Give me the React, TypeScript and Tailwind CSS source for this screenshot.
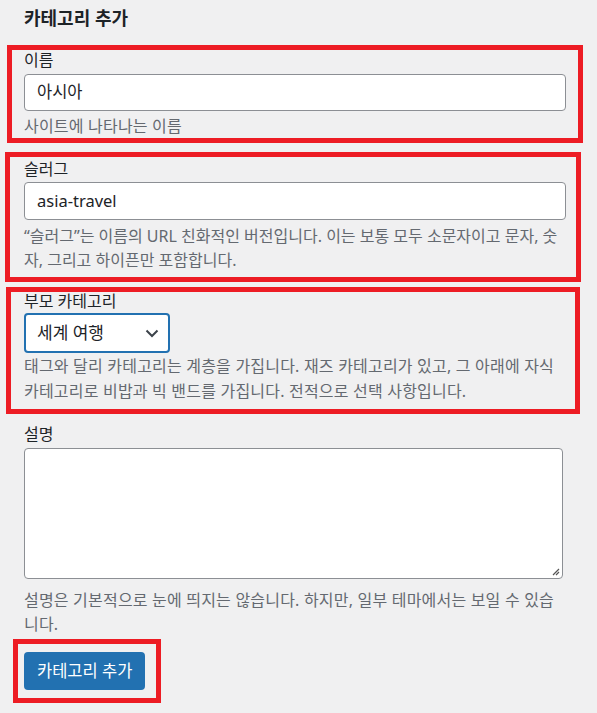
import React from "react";

const font = "font-['Noto_Sans','Noto_Sans_CJK_KR',sans-serif]";

export default function App() {
  return (
    <div className={`min-h-[713px] w-[597px] bg-[#f0f0f1] text-[#1d2327] ${font}`}>
      <div className="pl-[24px] pr-[31px] pt-[6px]">
        <h2 className="text-[18px] font-bold leading-[24px]">카테고리 추가</h2>

        {/* 이름 */}
        <div className="mt-[15px] -ml-[17px] -mr-[17px] border-[5px] border-[#ed1c24] px-[12px] pt-0 pb-[1px]">
          <label className="block text-[16px] leading-[20px]">이름</label>
          <div className="mt-[4px] flex h-[37px] items-center rounded-[4px] border border-[#8c8f94] bg-white px-[12px] text-[16.5px]">
            아시아
          </div>
          <p className="mt-[4px] text-[16px] tracking-[0.2px] leading-[22px] text-[#646970]">사이트에 나타나는 이름</p>
        </div>

        {/* 슬러그 */}
        <div className="mt-[9px] -ml-[19px] -mr-[15px] border-[5px] border-[#ed1c24] pl-[14px] pr-[10px] pt-[2px] pb-[5px]">
          <label className="block text-[16px] leading-[20px]">슬러그</label>
          <div className="mt-[3px] flex h-[38px] items-center rounded-[4px] border border-[#8c8f94] bg-white px-[12px] text-[16.5px]">
            asia-travel
          </div>
          <p className="mt-[4px] text-[16px] tracking-[0px] leading-[24px] text-[#646970]">
            “슬러그”는 이름의 URL 친화적인 버전입니다. 이는 보통 모두 소문자이고 문자, 숫자, 그리고 하이픈만 포함합니다.
          </p>
        </div>

        {/* 부모 카테고리 */}
        <div className="mt-[5px] -ml-[18px] -mr-[14px] border-[5px] border-[#ed1c24] pl-[13px] pr-[9px] pt-0 pb-[5px]">
          <label className="block text-[16px] leading-[18px]">부모 카테고리</label>
          <div className="mt-[3px] flex h-[40px] w-[146px] items-center justify-between rounded-[4px] border-2 border-[#2271b1] bg-white pl-[11px] pr-[9px] text-[17px]">
            <span>세계 여행</span>
            <svg width="14" height="9" viewBox="0 0 14 9" fill="none">
              <path d="M1.5 1.5 L7 7 L12.5 1.5" stroke="#3c434a" strokeWidth="2" />
            </svg>
          </div>
          <p className="mt-[1px] text-[16px] tracking-[0.2px] leading-[25px] text-[#646970]">
            태그와 달리 카테고리는 계층을 가집니다. 재즈 카테고리가 있고, 그 아래에 자식 카테고리로 비밥과 빅 밴드를 가집니다. 전적으로 선택 사항입니다.
          </p>
        </div>

        {/* 설명 */}
        <div className="mt-[10px]">
          <label className="block text-[16px] leading-[20px]">설명</label>
          <div className="relative mt-[4px] mr-[3px] h-[131px] rounded-[4px] border border-[#8c8f94] bg-white">
            <svg className="absolute bottom-[2px] right-[2px]" width="10" height="10" viewBox="0 0 10 10">
              <path d="M9 3 L3 9 M9 6 L6 9" stroke="#555" strokeWidth="1.2" />
            </svg>
          </div>
          <p className="mt-[9px] text-[16px] tracking-[0.2px] leading-[24px] text-[#646970]">
            설명은 기본적으로 눈에 띄지는 않습니다. 하지만, 일부 테마에서는 보일 수 있습니다.
          </p>
        </div>

        {/* 버튼 */}
        <div className="mt-[3px] -ml-[11px] inline-block border-[5px] border-[#ed1c24] pl-[6px] pr-[11px] pt-[8px] pb-[8px]">
          <button className="flex h-[38px] items-center rounded-[4px] bg-[#2271b1] px-[13px] text-[16.5px] text-white">
            카테고리 추가
          </button>
        </div>
      </div>
    </div>
  );
}
